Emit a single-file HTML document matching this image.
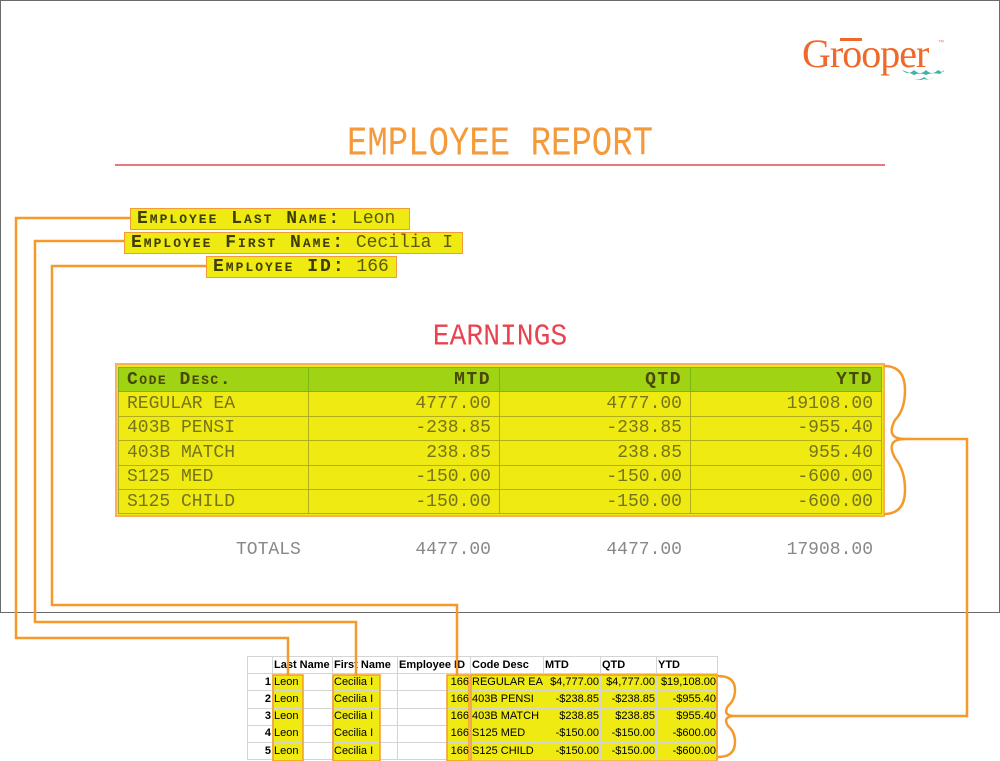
<!DOCTYPE html>
<html><head><meta charset="utf-8"><style>
*{margin:0;padding:0;box-sizing:border-box}
body{width:1000px;height:761px;background:#fff;position:relative;overflow:hidden;font-family:"Liberation Mono","DejaVu Sans Mono",monospace}
.a{position:absolute}
.report{left:0;top:0;width:1000px;height:613px;border:1px solid #6a6a6a;background:#fff}
.title{left:0;width:1000px;top:126px;text-align:center;color:#f59a3a;font-size:34px;transform:scaleY(1.2);letter-spacing:0px}
.earn{left:0;width:1000px;top:322px;text-align:center;color:#e8434f;font-size:28px;transform:scaleY(1.08)}
.fld{background:#eeea12;border:1.5px solid #f59a3a;color:#5c5a0a;font-size:18px;height:22px;line-height:20px;white-space:nowrap;padding-left:6px;overflow:hidden}
.fld b{font-variant:small-caps;letter-spacing:2px;color:#3f3d05}
.tbl{left:115px;top:363px;width:770px;height:154px;border:2px solid #f8b060;background:#eeea12}
table{border-collapse:collapse}
.rt{position:absolute;left:118px;top:367px}
.rt td{border:1px solid #b0ae1a;height:24.4px;font-size:18px;color:#76741a;padding:0 8px;line-height:22px}
.rt tr.h td{background:#9fd313;border-color:#7ab810;color:#4a4805;font-weight:bold;font-variant:small-caps;letter-spacing:1.5px}
.rt td.n{text-align:right}
.tot{top:540px;font-size:18px;color:#888}
.ss{position:absolute;left:247px;top:656px;font-family:"Liberation Sans Narrow","Liberation Sans",sans-serif;table-layout:fixed;width:470px}
.ss td{border:1px solid #d4d4d4;height:17.2px;font-size:11px;padding:0 1px;color:#000;white-space:nowrap;overflow:hidden;line-height:15px}
.ss tr.h td{font-weight:bold}
.ss td.r{text-align:right;font-weight:bold}
.ss td.y{background:#eeea12}
.ss td.n{text-align:right}
.yy{position:absolute;background:#eeea12}
</style></head><body>
<div class="a report"></div>

<div class="a" style="left:802px;top:32px;font-family:'Liberation Serif',serif;font-size:40px;color:#ef6a2a;letter-spacing:-1px;line-height:44px">Grooper</div>
<div class="a" style="left:840px;top:38px;width:22px;height:3px;background:#ef6a2a"></div>
<div class="a" style="left:938px;top:40px;font-size:6px;color:#e08050;font-family:'Liberation Sans'">™</div>
<svg class="a" style="left:900px;top:68px" width="46" height="16"><path d="M2 2 Q8 8 14 2 Q20 8 26 2 Q32 8 38 2 Q44 6 44 2 L40 6 Q32 4 26 7 Q20 4 14 7 Q8 4 2 2Z M12 9 Q18 14 24 9 Q30 14 34 9 Q30 13 24 11 Q18 14 12 9Z" fill="#3fb3a6"/></svg>

<div class="a title">EMPLOYEE REPORT</div>
<div class="a" style="left:115px;top:164px;width:770px;height:2px;background:#e8777f"></div>

<div class="a fld" style="left:130px;top:208px;width:280px"><b>Employee Last Name:</b>&nbsp;Leon</div>
<div class="a fld" style="left:124px;top:232px;width:339px"><b>Employee First Name:</b>&nbsp;Cecilia I</div>
<div class="a fld" style="left:206px;top:256px;width:191px"><b>Employee ID:</b>&nbsp;166</div>

<div class="a earn">EARNINGS</div>

<div class="a tbl"></div>
<table class="rt">
<tr class="h"><td style="width:190px">Code Desc.</td><td class="n" style="width:191px">MTD</td><td class="n" style="width:191px">QTD</td><td class="n" style="width:191px">YTD</td></tr>
<tr><td>REGULAR EA</td><td class="n">4777.00</td><td class="n">4777.00</td><td class="n">19108.00</td></tr>
<tr><td>403B PENSI</td><td class="n">-238.85</td><td class="n">-238.85</td><td class="n">-955.40</td></tr>
<tr><td>403B MATCH</td><td class="n">238.85</td><td class="n">238.85</td><td class="n">955.40</td></tr>
<tr><td>S125 MED</td><td class="n">-150.00</td><td class="n">-150.00</td><td class="n">-600.00</td></tr>
<tr><td>S125 CHILD</td><td class="n">-150.00</td><td class="n">-150.00</td><td class="n">-600.00</td></tr>
</table>
<div class="a tot" style="left:236px">TOTALS</div>
<div class="a tot" style="left:300px;width:191px;text-align:right">4477.00</div>
<div class="a tot" style="left:491px;width:191px;text-align:right">4477.00</div>
<div class="a tot" style="left:682px;width:191px;text-align:right">17908.00</div>

<div class="yy" style="left:273px;top:675px;width:30px;height:86px"></div>
<div class="yy" style="left:333px;top:675px;width:47px;height:86px"></div>
<div class="yy" style="left:447px;top:675px;width:22px;height:86px"></div>
<table class="ss">
<colgroup><col style="width:25px"><col style="width:60px"><col style="width:65px"><col style="width:73px"><col style="width:73px"><col style="width:57px"><col style="width:56px"><col style="width:61px"></colgroup>
<tr class="h"><td></td><td>Last Name</td><td>First Name</td><td>Employee ID</td><td>Code Desc</td><td>MTD</td><td>QTD</td><td>YTD</td></tr>
<tr><td class="r">1</td><td>Leon</td><td>Cecilia I</td><td class="n">166</td><td class="y">REGULAR EA</td><td class="y n">$4,777.00</td><td class="y n">$4,777.00</td><td class="y n">$19,108.00</td></tr>
<tr><td class="r">2</td><td>Leon</td><td>Cecilia I</td><td class="n">166</td><td class="y">403B PENSI</td><td class="y n">-$238.85</td><td class="y n">-$238.85</td><td class="y n">-$955.40</td></tr>
<tr><td class="r">3</td><td>Leon</td><td>Cecilia I</td><td class="n">166</td><td class="y">403B MATCH</td><td class="y n">$238.85</td><td class="y n">$238.85</td><td class="y n">$955.40</td></tr>
<tr><td class="r">4</td><td>Leon</td><td>Cecilia I</td><td class="n">166</td><td class="y">S125 MED</td><td class="y n">-$150.00</td><td class="y n">-$150.00</td><td class="y n">-$600.00</td></tr>
<tr><td class="r">5</td><td>Leon</td><td>Cecilia I</td><td class="n">166</td><td class="y">S125 CHILD</td><td class="y n">-$150.00</td><td class="y n">-$150.00</td><td class="y n">-$600.00</td></tr>
</table>

<svg class="a" style="left:0;top:0" width="1000" height="761">
<g fill="none" stroke="#f59a2a" stroke-width="2.5">
<path d="M130 218 H16 V638 H288 V676"/>
<path d="M124 241 H35 V622 H356 V676"/>
<path d="M206 266 H52 V605 H457 V676"/>
<path d="M884 366 Q905 366 905 390 Q905 410 895 420 Q885 439 905 439 H967 V716 H735"/>
<path d="M905 439 Q885 439 895 458 Q905 470 905 490 Q905 514 884 514"/>
<path d="M718 676 Q735 676 735 690 Q735 700 728 706 Q722 716 735 716 Q722 716 728 726 Q735 732 735 742 Q735 757 718 757"/>
</g>
<g fill="none" stroke="#f59a2a" stroke-width="1.5">
<rect x="273" y="675" width="30" height="86"/>
<rect x="333" y="675" width="47" height="86"/>
<rect x="447" y="675" width="22" height="86"/>
<rect x="471" y="675" width="246" height="86"/>
</g>
</svg>
</body></html>
